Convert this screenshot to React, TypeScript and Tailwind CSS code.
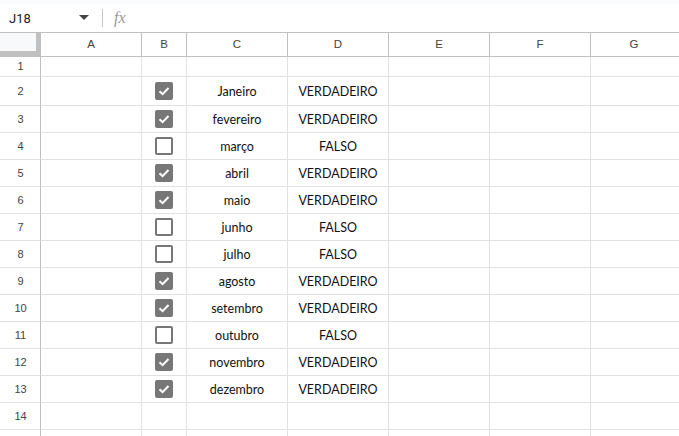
import React from "react";

const cols = [
  { l: "A", w: "w-[101px]" },
  { l: "B", w: "w-[45px]" },
  { l: "C", w: "w-[101px]" },
  { l: "D", w: "w-[101px]" },
  { l: "E", w: "w-[101px]" },
  { l: "F", w: "w-[101px]" },
];

const data: (null | [boolean, string])[] = [
  null,
  [true, "Janeiro"],
  [true, "fevereiro"],
  [false, "março"],
  [true, "abril"],
  [true, "maio"],
  [false, "junho"],
  [false, "julho"],
  [true, "agosto"],
  [true, "setembro"],
  [false, "outubro"],
  [true, "novembro"],
  [true, "dezembro"],
  null,
  null,
];

function Check({ on }: { on: boolean }) {
  if (on)
    return (
      <div className="w-[18px] h-[18px] rounded-[2px] bg-[#777777] flex items-center justify-center">
        <svg width="14" height="14" viewBox="0 0 14 14">
          <path d="M2.5 7.2 L5.6 10.2 L11.5 4" fill="none" stroke="#fff" strokeWidth="2" />
        </svg>
      </div>
    );
  return <div className="w-[18px] h-[18px] rounded-[2px] border-2 border-[#777777] bg-white" />;
}

export default function App() {
  const rowH = (i: number) => (i === 0 ? "h-[20px]" : i === 1 ? "h-[29px]" : "h-[27px]");
  return (
    <div className="w-[679px] h-[436px] overflow-hidden bg-white" style={{ fontFamily: "'Liberation Sans', Arial, sans-serif" }}>
      <div className="h-[4px] bg-[#f9fbfd]" />
      <div className="h-[28px] flex items-center bg-white">
        <div className="w-[96px] flex items-center pl-[9px] pr-[7px] justify-between">
          <span className="text-[13px] text-[#202124] font-['Roboto'] leading-none">J18</span>
          <svg width="10" height="6" viewBox="0 0 10 6"><path d="M0 0 L10 0 L5 5 Z" fill="#444" /></svg>
        </div>
        <div className="w-px h-[18px] bg-[#c7c7c7] ml-[6px]" />
        <span className="ml-[11px] text-[16px] italic text-[#9a9a9a] leading-none" style={{ fontFamily: "'Liberation Serif', serif" }}>fx</span>
      </div>
      {/* header */}
      <div className="flex border-t border-[#c0c0c0] h-[25px]">
        <div className="w-[41px] h-[24px] flex">
          <div className="flex-1 flex flex-col">
            <div className="h-[18px] bg-[#f8f9fa]" />
            <div className="h-[6px] bg-[#c0c0c0]" />
          </div>
          <div className="w-[4px] bg-[#c0c0c0]" />
          <div className="w-px bg-[#c0c0c0]" />
        </div>
        {cols.map((c) => (
          <div key={c.l} className={`${c.w} h-[24px] border-r border-b border-[#c0c0c0] flex items-center justify-center text-[11.5px] text-[#444]`}>
            {c.l}
          </div>
        ))}
        <div className="flex-1 h-[24px] border-b border-[#c0c0c0] flex items-center justify-center text-[11.5px] text-[#444] pr-[2px]">G</div>
      </div>
      {data.map((d, i) => (
        <div key={i} className={`flex ${rowH(i)}`}>
          <div className="w-[41px] border-r border-b border-r-[#c0c0c0] border-b-[#e2e2e2] flex items-center justify-center text-[11px] text-[#444] pl-[1px]">
            {i < 14 ? i + 1 : null}
          </div>
          {cols.map((c, j) => (
            <div key={c.l} className={`${c.w} border-r border-b border-[#e2e2e2] flex items-center justify-center text-[12.5px] text-[#111]`} style={{ fontFamily: "Lato, 'Open Sans', sans-serif" }}>
              {d && j === 1 ? <Check on={d[0]} /> : null}
              {d && j === 2 ? <span className="mt-[2px]">{d[1]}</span> : null}
              {d && j === 3 ? <span className="mt-[2px]">{d[0] ? "VERDADEIRO" : "FALSO"}</span> : null}
            </div>
          ))}
          <div className="flex-1 border-b border-[#e2e2e2]" />
        </div>
      ))}
    </div>
  );
}
